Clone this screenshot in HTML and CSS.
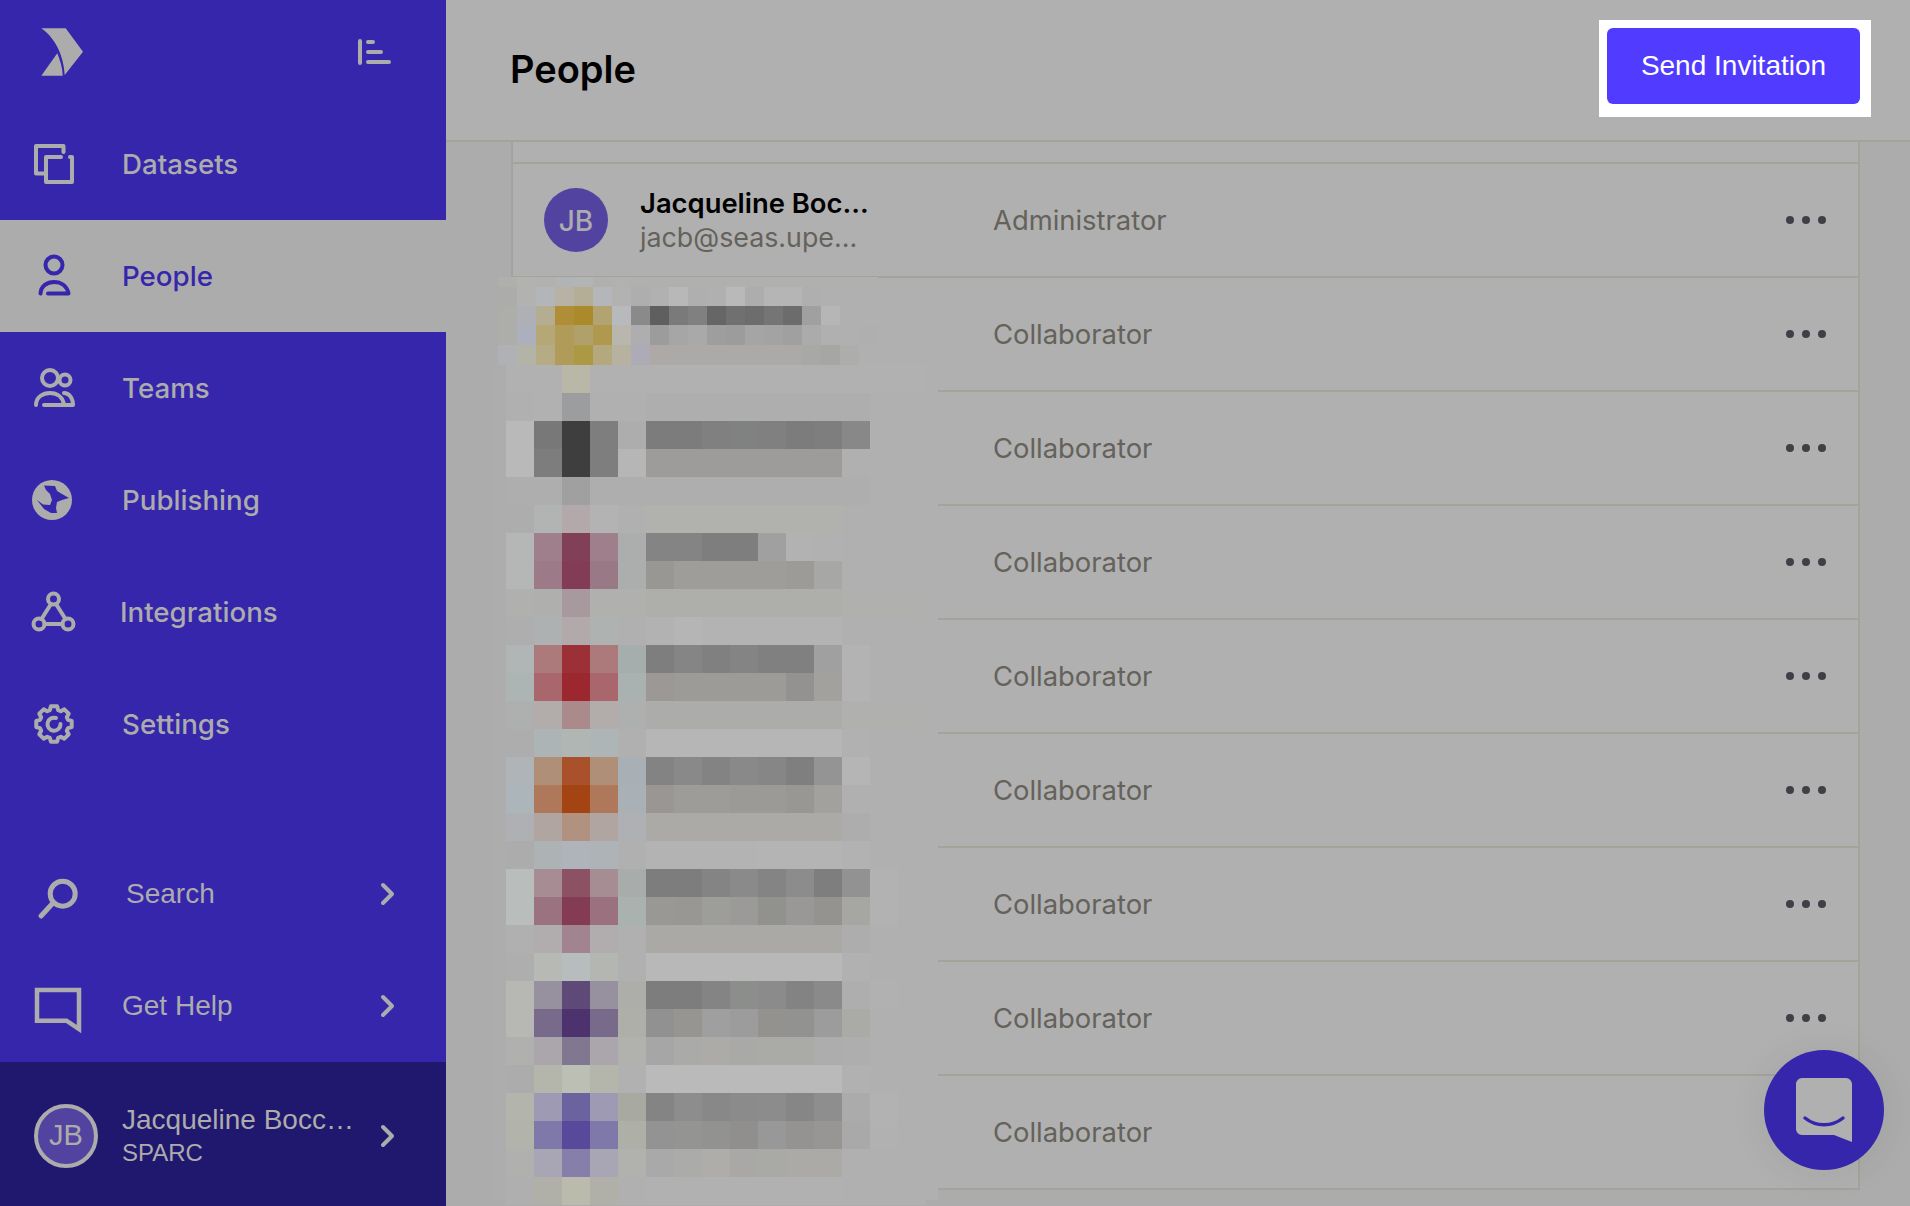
FILE: index.html
```html
<!DOCTYPE html>
<html lang="en">
<head>
    <meta charset="UTF-8">
    <title>People</title>
    <link rel="stylesheet" href="styles.css">
</head>
<body>
    <aside class="sidebar">
        <div class="sidebar-head">
            <svg class="logo" width="60" height="60" viewBox="0 0 60 60">
                <path class="fill" d="M11.300 8.300H35.700L53 31.700L34.700 55C34 40 28 20 11.300 8.300Z"/>
                <path class="fill" d="M11.300 55.700L27.300 33.300C30 40 32.500 48 32.700 55.700Z"/>
            </svg>
            <svg class="collapse" width="34" height="26" viewBox="0 0 34 26">
                <path d="M2 2V24M10 3H15M10 13H23M10 23H31"/>
            </svg>
        </div>

        <nav class="nav">
            <a class="nav-item">
                <svg class="nav-icon" viewBox="0 0 60 60"><path d="M39.500 18V12H12V39.500H20M37 23H22V48H48V23H46"/></svg>
                <span>Datasets</span>
            </a>
            <a class="nav-item active">
                <svg class="nav-icon" viewBox="0 0 60 60">
                    <circle cx="30" cy="19" r="8.500"/>
                    <path d="M16.500 47.500C17 40 23 36 30 36C37 36 43 40 44.500 47.500H24"/>
                </svg>
                <span>People</span>
            </a>
            <a class="nav-item">
                <svg class="nav-icon" viewBox="0 0 60 60">
                    <circle cx="26" cy="20" r="8"/>
                    <circle cx="41" cy="22" r="5.500"/>
                    <path d="M12 47C12 39 19 35 26 35C33 35 39 39 40 47H20M40 35C45 35 49 40 49 47H38"/>
                </svg>
                <span>Teams</span>
            </a>
            <a class="nav-item">
                <svg class="nav-icon" viewBox="0 0 60 60">
                    <circle class="fill" cx="28" cy="30" r="20"/>
                    <path class="land" d="M20 15.500L31 16L33 21L38 24L45 28L38 30L33 32L32 38L33 43L27 43L20 39L13 30L19 34.500L26 35L28 30L26 24L22 20Z"/>
                </svg>
                <span>Publishing</span>
            </a>
            <a class="nav-item integrations">
                <svg class="nav-icon" viewBox="0 0 60 60">
                    <circle cx="29.500" cy="17" r="5.500"/>
                    <circle cx="15" cy="42" r="5.500"/>
                    <circle cx="44" cy="42" r="5.500"/>
                    <path d="M27 22L17.500 37M32 22L41.500 37M20.500 42H38.500"/>
                </svg>
                <span>Integrations</span>
            </a>
            <a class="nav-item">
                <svg class="nav-icon" viewBox="0 0 60 60">
                    <path d="M26.900 12.300L33.100 12.300L34.200 16.100L36.800 17.200L40.300 15.300L44.700 19.700L42.800 23.200L43.900 25.800L47.700 26.900L47.700 33.100L43.900 34.200L42.800 36.800L44.700 40.300L40.300 44.700L36.800 42.800L34.200 43.900L33.100 47.700L26.900 47.700L25.800 43.900L23.200 42.800L19.700 44.700L15.300 40.300L17.200 36.800L16.100 34.200L12.300 33.100L12.300 26.900L16.100 25.800L17.200 23.200L15.300 19.700L19.700 15.300L23.200 17.200L25.800 16.100Z"/>
                    <path d="M32 24A6.500 6.500 0 1 0 36.500 30"/>
                </svg>
                <span>Settings</span>
            </a>
        </nav>

        <div class="nav-bottom">
            <a class="nav-item plain search">
                <svg class="nav-icon" viewBox="0 0 60 60">
                    <circle class="thick" cx="38.700" cy="29.700" r="12.500"/>
                    <path class="thick" d="M29 39L17 52"/>
                </svg>
                <span>Search</span>
                <svg class="chevron" width="16" height="24" viewBox="0 0 16 24"><path d="M3 3L12 12L3 21"/></svg>
            </a>
            <a class="nav-item plain">
                <svg class="nav-icon" viewBox="0 0 60 60"><path class="square" d="M13 14H55V53L42.500 44.700H13Z"/></svg>
                <span>Get Help</span>
                <svg class="chevron" width="16" height="24" viewBox="0 0 16 24"><path d="M3 3L12 12L3 21"/></svg>
            </a>
            <div class="account">
                <div class="account-avatar">JB</div>
                <div class="account-text">
                    <div class="account-name">Jacqueline Bocc…</div>
                    <div class="account-org">SPARC</div>
                </div>
                <svg class="chevron" width="16" height="24" viewBox="0 0 16 24"><path d="M3 3L12 12L3 21"/></svg>
            </div>
        </div>
    </aside>

    <main class="main">
        <header class="page-head">
            <h1>People</h1>
            <div class="invite-frame">
                <button class="invite">Send Invitation</button>
            </div>
        </header>

        <section class="table">
            <div class="table-top"></div>
            <div class="row">
                <div class="user">
                    <div class="avatar">JB</div>
                    <div class="user-text">
                        <div class="user-name">Jacqueline Boc...</div>
                        <div class="user-email">jacb@seas.upe...</div>
                    </div>
                </div>
                <div class="role">Administrator</div>
                <div class="dots"><i></i><i></i><i></i></div>
            </div>
            <div class="row"><div class="user"></div><div class="role">Collaborator</div><div class="dots"><i></i><i></i><i></i></div></div>
            <div class="row"><div class="user"></div><div class="role">Collaborator</div><div class="dots"><i></i><i></i><i></i></div></div>
            <div class="row"><div class="user"></div><div class="role">Collaborator</div><div class="dots"><i></i><i></i><i></i></div></div>
            <div class="row"><div class="user"></div><div class="role">Collaborator</div><div class="dots"><i></i><i></i><i></i></div></div>
            <div class="row"><div class="user"></div><div class="role">Collaborator</div><div class="dots"><i></i><i></i><i></i></div></div>
            <div class="row"><div class="user"></div><div class="role">Collaborator</div><div class="dots"><i></i><i></i><i></i></div></div>
            <div class="row"><div class="user"></div><div class="role">Collaborator</div><div class="dots"><i></i><i></i><i></i></div></div>
            <div class="row"><div class="user"></div><div class="role">Collaborator</div><div class="dots"><i></i><i></i><i></i></div></div>
        </section>

        <!-- pixelated names, filled by mosaic.js -->
        <div class="mosaic mosaic-first" id="mosaic-first"></div>
        <div class="mosaic mosaic-rest" id="mosaic-rest"></div>

        <button class="chat">
            <svg width="64" height="68" viewBox="0 0 64 68">
                <path class="chat-bubble" d="M10 2H54C57 2 60 5 60 8V66L42 59H10C7 59 4 56 4 53V8C4 5 7 2 10 2Z"/>
                <path class="chat-smile" d="M13 42C24 51 40 51 51 42"/>
            </svg>
        </button>
    </main>

    <script src="mosaic.js"></script>
</body>
</html>
```

FILE: styles.css
```css
* {
    box-sizing: border-box;
}

body, html {
    margin: 0;
    padding: 0;
    width: 100%;
    height: 100%;
    overflow: hidden;
}

body {
    display: flex;
    background-color: #acacac;
    font-family: "Inter", "Liberation Sans", sans-serif;
}

.sidebar {
    width: 446px;
    height: 100%;
    flex-shrink: 0;
    display: flex;
    flex-direction: column;
    background-color: #3626ac;
    color: #acacac;
}

.sidebar svg {
    fill: none;
    stroke: #acacac;
}

.sidebar svg .fill {
    fill: #acacac;
    stroke: none;
}

.sidebar-head {
    height: 108px;
    display: flex;
    align-items: flex-start;
    justify-content: space-between;
    padding-left: 30px;
    padding-right: 54px;
}

.logo {
    margin-top: 20px;
}

.collapse {
    margin-top: 39px;
    stroke-width: 4;
    stroke-linecap: round;
}

.nav-item {
    height: 112px;
    display: flex;
    align-items: center;
    padding-left: 24px;
    font-size: 27.700px;
    font-weight: 500;
    color: #acacac;
}

.nav-item span {
    margin-left: 38px;
}

.nav-icon {
    width: 60px;
    height: 60px;
    flex-shrink: 0;
    stroke-width: 4;
    stroke-linecap: round;
    stroke-linejoin: round;
}

.nav-icon .land {
    fill: #3626ac;
    stroke: none;
}

.nav-icon .thick {
    stroke-width: 5;
}

.nav-icon .square {
    stroke-width: 4.500;
    stroke-linecap: butt;
    stroke-linejoin: miter;
}

.nav-item.active {
    background-color: #acacac;
    color: #3626ac;
}

.sidebar .nav-item.active svg {
    stroke: #3626ac;
}

.nav-item.integrations span {
    margin-left: 36px;
}

.nav-bottom {
    margin-top: auto;
}

.nav-item.plain {
    font-family: "Liberation Sans", sans-serif;
    font-size: 28px;
    font-weight: 400;
}

.nav-item.search span {
    margin-left: 42px;
}

.chevron {
    margin-left: auto;
    margin-right: 50px;
    stroke-width: 4;
    stroke-linecap: round;
    stroke-linejoin: round;
    flex-shrink: 0;
}

.account {
    height: 144px;
    display: flex;
    align-items: center;
    padding-left: 34px;
    padding-top: 3px;
    background-color: #20186e;
    font-family: "Liberation Sans", sans-serif;
}

.account-avatar {
    width: 64px;
    height: 64px;
    border: 4px solid #acacac;
    border-radius: 50%;
    background-color: #5343a0;
    display: flex;
    align-items: center;
    justify-content: center;
    font-size: 29px;
    flex-shrink: 0;
}

.account-text {
    margin-left: 24px;
}

.account-name {
    font-size: 28px;
    line-height: 34px;
}

.account-org {
    font-size: 24px;
    line-height: 32px;
}

.main {
    flex: 1;
    position: relative;
    overflow: hidden;
    height: 100%;
}

.page-head {
    height: 142px;
    display: flex;
    align-items: flex-start;
    justify-content: space-between;
    padding-left: 64px;
    padding-right: 39px;
    padding-top: 20px;
    background-color: #b0b0b0;
    border-bottom: 2px solid #a3a39b;
}

.page-head h1 {
    margin: 21px 0 0;
    font-size: 38px;
    line-height: 56px;
    font-weight: 600;
    color: #000;
}

.invite-frame {
    padding: 8px 11px 13px 8px;
    background-color: #fff;
}

.invite {
    display: block;
    width: 253px;
    height: 76px;
    border: none;
    border-radius: 6px;
    background-color: #513bff;
    color: #fff;
    font-family: "Liberation Sans", sans-serif;
    font-size: 28px;
}

.table {
    margin-left: 65px;
    width: 1349px;
    border-left: 2px solid #a3a39b;
    border-right: 2px solid #a3a39b;
    background-color: #b0b0b0;
}

.table-top {
    height: 22px;
    border-bottom: 2px solid #a3a39b;
}

.row {
    height: 114px;
    display: flex;
    align-items: center;
    border-bottom: 2px solid #a3a39b;
}

.user {
    width: 480px;
    padding-left: 31px;
    display: flex;
    align-items: center;
}

.avatar {
    width: 64px;
    height: 64px;
    border-radius: 50%;
    background-color: #5343a0;
    color: #acacac;
    display: flex;
    align-items: center;
    justify-content: center;
    font-size: 28px;
    font-weight: 500;
    padding-top: 2px;
}

.user-text {
    margin-left: 32px;
}

.user-name {
    font-size: 27.400px;
    line-height: 34px;
    font-weight: 600;
    color: #000;
}

.user-email {
    font-size: 26.800px;
    line-height: 34px;
    color: #64625b;
}

.role {
    font-size: 27.400px;
    color: #64625b;
}

.dots {
    margin-left: auto;
    margin-right: 32px;
    display: flex;
    gap: 8px;
}

.dots i {
    width: 8px;
    height: 8px;
    border-radius: 50%;
    background-color: #3f3f46;
}

.mosaic {
    position: absolute;
    display: grid;
    background-color: #b0b0b0;
}

.mosaic-first {
    left: 52px;
    top: 277px;
    width: 375px;
    height: 88px;
    grid-template-columns: repeat(20, 19px);
    grid-template-rows: 10px 19px 19px 20px 20px;
}

.mosaic-rest {
    left: 47px;
    top: 365px;
    width: 445px;
    height: 835px;
    padding-left: 13px;
    background: linear-gradient(to right, #adadad 13px, #b0b0b0 13px);
    grid-template-columns: repeat(15, 28px);
    grid-auto-rows: 28px;
}

.chat {
    position: absolute;
    left: 1318px;
    top: 1050px;
    width: 120px;
    height: 120px;
    padding: 0;
    border: none;
    border-radius: 50%;
    background-color: #3626ac;
    box-shadow: 0 2px 40px rgba(0, 0, 0, 0.07);
    display: flex;
    align-items: center;
    justify-content: center;
}

.chat-bubble {
    fill: #b0b0b0;
}

.chat-smile {
    fill: none;
    stroke: #3626ac;
    stroke-width: 3.500;
    stroke-linecap: round;
}
```

FILE: mosaic.js
```js
// colours of the blurred cells, one array per row of the grid
const firstRows = [
    ["#afafac", "#b2b2af", "#b1b1b0", "#b1b4b4", "#b2b4b5", "#b0b0ae", "#b1b1af", "#b0b0ae", "#b0b0ae", "#b0b0ae", "#b0b0ae", "#b0b0ae", "#b0b0ae", "#b0b0ae", "#b0b0ae", "#b0b0ae", "#b0b0ae", "#b0b0ae", "#b0b0ae", "#b0b0ae"],
    ["#acacaa", "#b2b2b0", "#b4b5b8", "#b6b2a6", "#b4ae96", "#b5b6ba", "#b2b2b0", "#aeaeae", "#b1b1b1", "#b8b8b8", "#afafaf", "#b0b0b0", "#b9b9b9", "#adadad", "#b5b5b5", "#b5b5b5", "#afafaf", "#b0b0b0", "#b0b0b0", "#b0b0b0"],
    ["#adadaa", "#aeb0b6", "#b4ad92", "#b08e38", "#ab8a2c", "#b1a470", "#b8b9bd", "#8a8a8a", "#5f5f5f", "#7a7a7a", "#808080", "#666666", "#707070", "#6d6d6d", "#757575", "#6c6c6c", "#a0a0a0", "#b6b6b6", "#b0b0b0", "#b0b0b0"],
    ["#adadaa", "#acb0bc", "#b6a776", "#b09c58", "#b0a06a", "#b0984e", "#b8b6ad", "#aeaeb0", "#9c9c9c", "#a6a6a6", "#a9a9a9", "#9e9e9e", "#9c9c9c", "#a5a5a5", "#a3a3a3", "#a0a0a0", "#ababab", "#b0b0b0", "#b0b0b0", "#afafaf"],
    ["#b0b1b6", "#b4b3a8", "#b5ab84", "#b09c58", "#ad9844", "#b4a97e", "#b7b1a0", "#adabb6", "#aea8a6", "#acaaa8", "#acaaa8", "#acaaa8", "#acaaa8", "#acaaa8", "#acaaa8", "#acaaa8", "#a8a8a6", "#a6a6a4", "#adadab", "#b0b0b0"]
];

// face columns, then the name columns (a short list repeats its last colour)
const restRows = [
    [["#b1b1b1", "#b1b1b1", "#b9b8a8", "#b1b1b1", "#b1b1b1"], ["#b1b1b1"]],
    [["#b0b0b0", "#b1b1b1", "#9c9d9f", "#b0b0b0", "#b0b0b0"], ["#aeaeae", "#aeaeae", "#aeaeae", "#aeaeae", "#aeaeae", "#aeaeae", "#aeaeae", "#aeaeae", "#b0b0b0"]],
    [["#b9b9b9", "#787878", "#3e3e3e", "#7e7e7e", "#adadad"], ["#7c7c7c", "#7c7c7c", "#808080", "#808282", "#808080", "#7c7c7c", "#7e7e7e", "#888888", "#b0b0b0"]],
    [["#b9b9b9", "#7d7d7d", "#3e3e3e", "#7e7e7e", "#b6b6b6"], ["#9d9c9a", "#9d9c9a", "#9d9c9a", "#9d9c9a", "#9d9c9a", "#9d9c9a", "#9d9c9a", "#b0b0b0"]],
    [["#aeaeae", "#aeaeae", "#9fa09f", "#aeaeae", "#aeaeae"], ["#aeaeae", "#aeaeae", "#aeaeae", "#aeaeae", "#aeaeae", "#aeaeae", "#aeaeae", "#aeaeae", "#b0b0b0"]],

    [["#adadad", "#b2b4b3", "#b3a8aa", "#b2b3b2", "#b0b0b0"], ["#b1b1ae", "#b1b1ae", "#b1b1ae", "#b1b1ae", "#b1b1ae", "#b1b1ae", "#b1b1ae", "#b0b0b0"]],
    [["#b5b7b6", "#9e7f8b", "#823f58", "#9e7f8b", "#abaeac"], ["#848484", "#848484", "#7e7e7e", "#7e7e7e", "#a0a0a0", "#b2b2b2", "#b1b1b1", "#b0b0b0"]],
    [["#b5b7b6", "#9d7a88", "#823c55", "#9a7986", "#abaeac"], ["#989794", "#9e9d9a", "#9e9d9a", "#9e9d9a", "#9e9d9a", "#9c9b98", "#a7a7a6", "#b0b0b0"]],
    [["#b0b0ae", "#afafae", "#a8999f", "#b0b0af", "#b0b0ae"], ["#aeaeab", "#aeaeab", "#aeaeab", "#aeaeab", "#aeaeab", "#aeaeab", "#aeaeab", "#b0b0ae"]],

    [["#aeaeae", "#adb1b1", "#b1a9aa", "#aeb2b1", "#b0b0b0"], ["#b2b2b2", "#b5b5b5", "#b3b3b3", "#b3b3b3", "#b3b3b3", "#b3b3b3", "#b3b3b3", "#b0b0b0"]],
    [["#b0b6b6", "#ad7a7c", "#9c3037", "#ad7a7c", "#a6adad"], ["#7e7e7e", "#858585", "#808080", "#848484", "#808080", "#808080", "#a0a0a0", "#b3b3b3", "#b0b0b0"]],
    [["#adb5b4", "#a9676d", "#9c272e", "#a9676d", "#a9b2b1"], ["#9c9896", "#9c9b98", "#9c9b98", "#9c9b98", "#9c9b98", "#939290", "#a3a19e", "#b3b3b3", "#b0b0b0"]],
    [["#adb0ae", "#b2acaa", "#ab8a8c", "#b2acaa", "#adb0ae"], ["#acacaa", "#acacaa", "#acacaa", "#acacaa", "#acacaa", "#acacaa", "#acacaa", "#b0b0ae"]],

    [["#adadad", "#adb4b6", "#b0b6b4", "#adb5b6", "#b0b0b0"], ["#b6b6b6", "#b6b6b6", "#b6b6b6", "#b6b6b6", "#b6b6b6", "#b6b6b6", "#b6b6b6", "#b1b1b1", "#b0b0b0"]],
    [["#aeb4b8", "#b08f78", "#a8512a", "#b08f78", "#a9b0b5"], ["#838383", "#898989", "#838383", "#898989", "#868686", "#7f7f7f", "#949494", "#b5b5b5", "#b0b0b0"]],
    [["#abb5ba", "#af785b", "#a44413", "#af785b", "#a9b1b7"], ["#9a9694", "#9d9c99", "#9d9c99", "#9b9a97", "#9b9a97", "#989794", "#a2a19e", "#b0b0b0"]],
    [["#aeb0b3", "#b0a5a0", "#b19180", "#b0a5a0", "#aeb0b3"], ["#abaaa7", "#abaaa7", "#abaaa7", "#abaaa7", "#abaaa7", "#abaaa7", "#abaaa7", "#adadad", "#b0b0b0"]],

    [["#acacac", "#adb2b4", "#aeb4b9", "#adb3b6", "#b0b0b0"], ["#b3b3b3", "#b3b3b3", "#b3b3b3", "#b3b3b3", "#b4b4b4", "#b4b4b4", "#b4b4b4", "#b2b2b2", "#b0b0b0"]],
    [["#b9bebd", "#a78c94", "#8c5163", "#a68c93", "#a8acaa"], ["#7d7d7d", "#7d7d7d", "#848484", "#8a8a8a", "#848484", "#8c8c8c", "#7e7e7e", "#929292", "#b2b2b2", "#b0b0b0"]],
    [["#b9bebd", "#9a7280", "#843c55", "#9b717f", "#aab2b0"], ["#999895", "#989794", "#9d9d9a", "#9b9a98", "#91918d", "#999896", "#94938f", "#a6a6a2", "#b2b2b2", "#b0b0b0"]],
    [["#b0b0b0", "#b1acae", "#a28390", "#b1acae", "#b0b0b0"], ["#aaa9a6", "#aaa9a6", "#aaa9a6", "#aaa9a6", "#aaa9a6", "#aaa9a6", "#aaa9a6", "#adadad", "#b0b0b0"]],

    [["#aeaeae", "#b6b9b4", "#b6bdbc", "#b4b7b1", "#b0b0b0"], ["#b8b8b8", "#b8b8b8", "#b8b8b8", "#b8b8b8", "#b8b8b8", "#b8b8b8", "#b8b8b8", "#b1b1b1", "#b0b0b0"]],
    [["#b7b7b4", "#96909f", "#5f4977", "#96909f", "#adadaa"], ["#7d7d7d", "#7d7d7d", "#848484", "#8c8e8c", "#8b8b8b", "#838383", "#8a8a8a", "#aeaeae", "#b1b1b1", "#b0b0b0"]],
    [["#b7b7b4", "#786a8a", "#4e326d", "#786a8a", "#adafa8"], ["#919191", "#969592", "#9f9f9f", "#9c9c9c", "#93928f", "#929290", "#9c9c9c", "#aaaaa7", "#b0b0b0"]],
    [["#b0b0ae", "#aaa6ac", "#817790", "#aaa6ac", "#b1b1ae"], ["#a6a6a6", "#aaaaa8", "#acaba8", "#a9a9a7", "#aaaaa7", "#aaaaa7", "#adadad", "#aeaeae", "#b0b0b0"]],

    [["#acacac", "#b4b5ab", "#bcbfb4", "#b4b5ab", "#b1b1b1"], ["#bababa", "#bababa", "#bababa", "#bababa", "#bababa", "#bababa", "#bababa", "#b1b1b1", "#b0b0b0"]],
    [["#b3b4ab", "#9e9ab4", "#6b62a0", "#9e9ab4", "#a8a9a1"], ["#848484", "#8d8d8d", "#888888", "#8b8b8b", "#8c8c8c", "#868686", "#8e8e8e", "#ababab", "#b2b2b2", "#b0b0b0"]],
    [["#b2b3aa", "#7f79a9", "#58499b", "#7f79a9", "#aeafa6"], ["#939393", "#949493", "#929290", "#908f8d", "#989898", "#949391", "#979694", "#a9a9a9", "#b1b1b1", "#b0b0b0"]],
    [["#b0b0ae", "#a8a5b5", "#857fa9", "#a8a5b5", "#b1b1ae"], ["#a9a9a9", "#ababa9", "#aeadaa", "#a9a8a6", "#a9a9a6", "#abaaa7", "#abaaa7", "#b0b0b0"]],

    [["#afafaf", "#b0b0a8", "#babbad", "#b0b0a8", "#b0b0b0"], ["#b1b1b1", "#b1b1b1", "#b1b1b1", "#b1b1b1", "#b1b1b1", "#b1b1b1", "#b1b1b1", "#b0b0b0"]]
];

function addCell(parent, colour) {
    const cell = document.createElement("div");
    cell.style.backgroundColor = colour;
    parent.appendChild(cell);
}

const first = document.getElementById("mosaic-first");
firstRows.forEach((row) => {
    row.forEach((colour) => addCell(first, colour));
});

const rest = document.getElementById("mosaic-rest");
restRows.forEach(([face, name]) => {
    face.forEach((colour) => addCell(rest, colour));
    for (let i = 0; i < 10; i++) {
        addCell(rest, name[Math.min(i, name.length - 1)]);
    }
});
```
